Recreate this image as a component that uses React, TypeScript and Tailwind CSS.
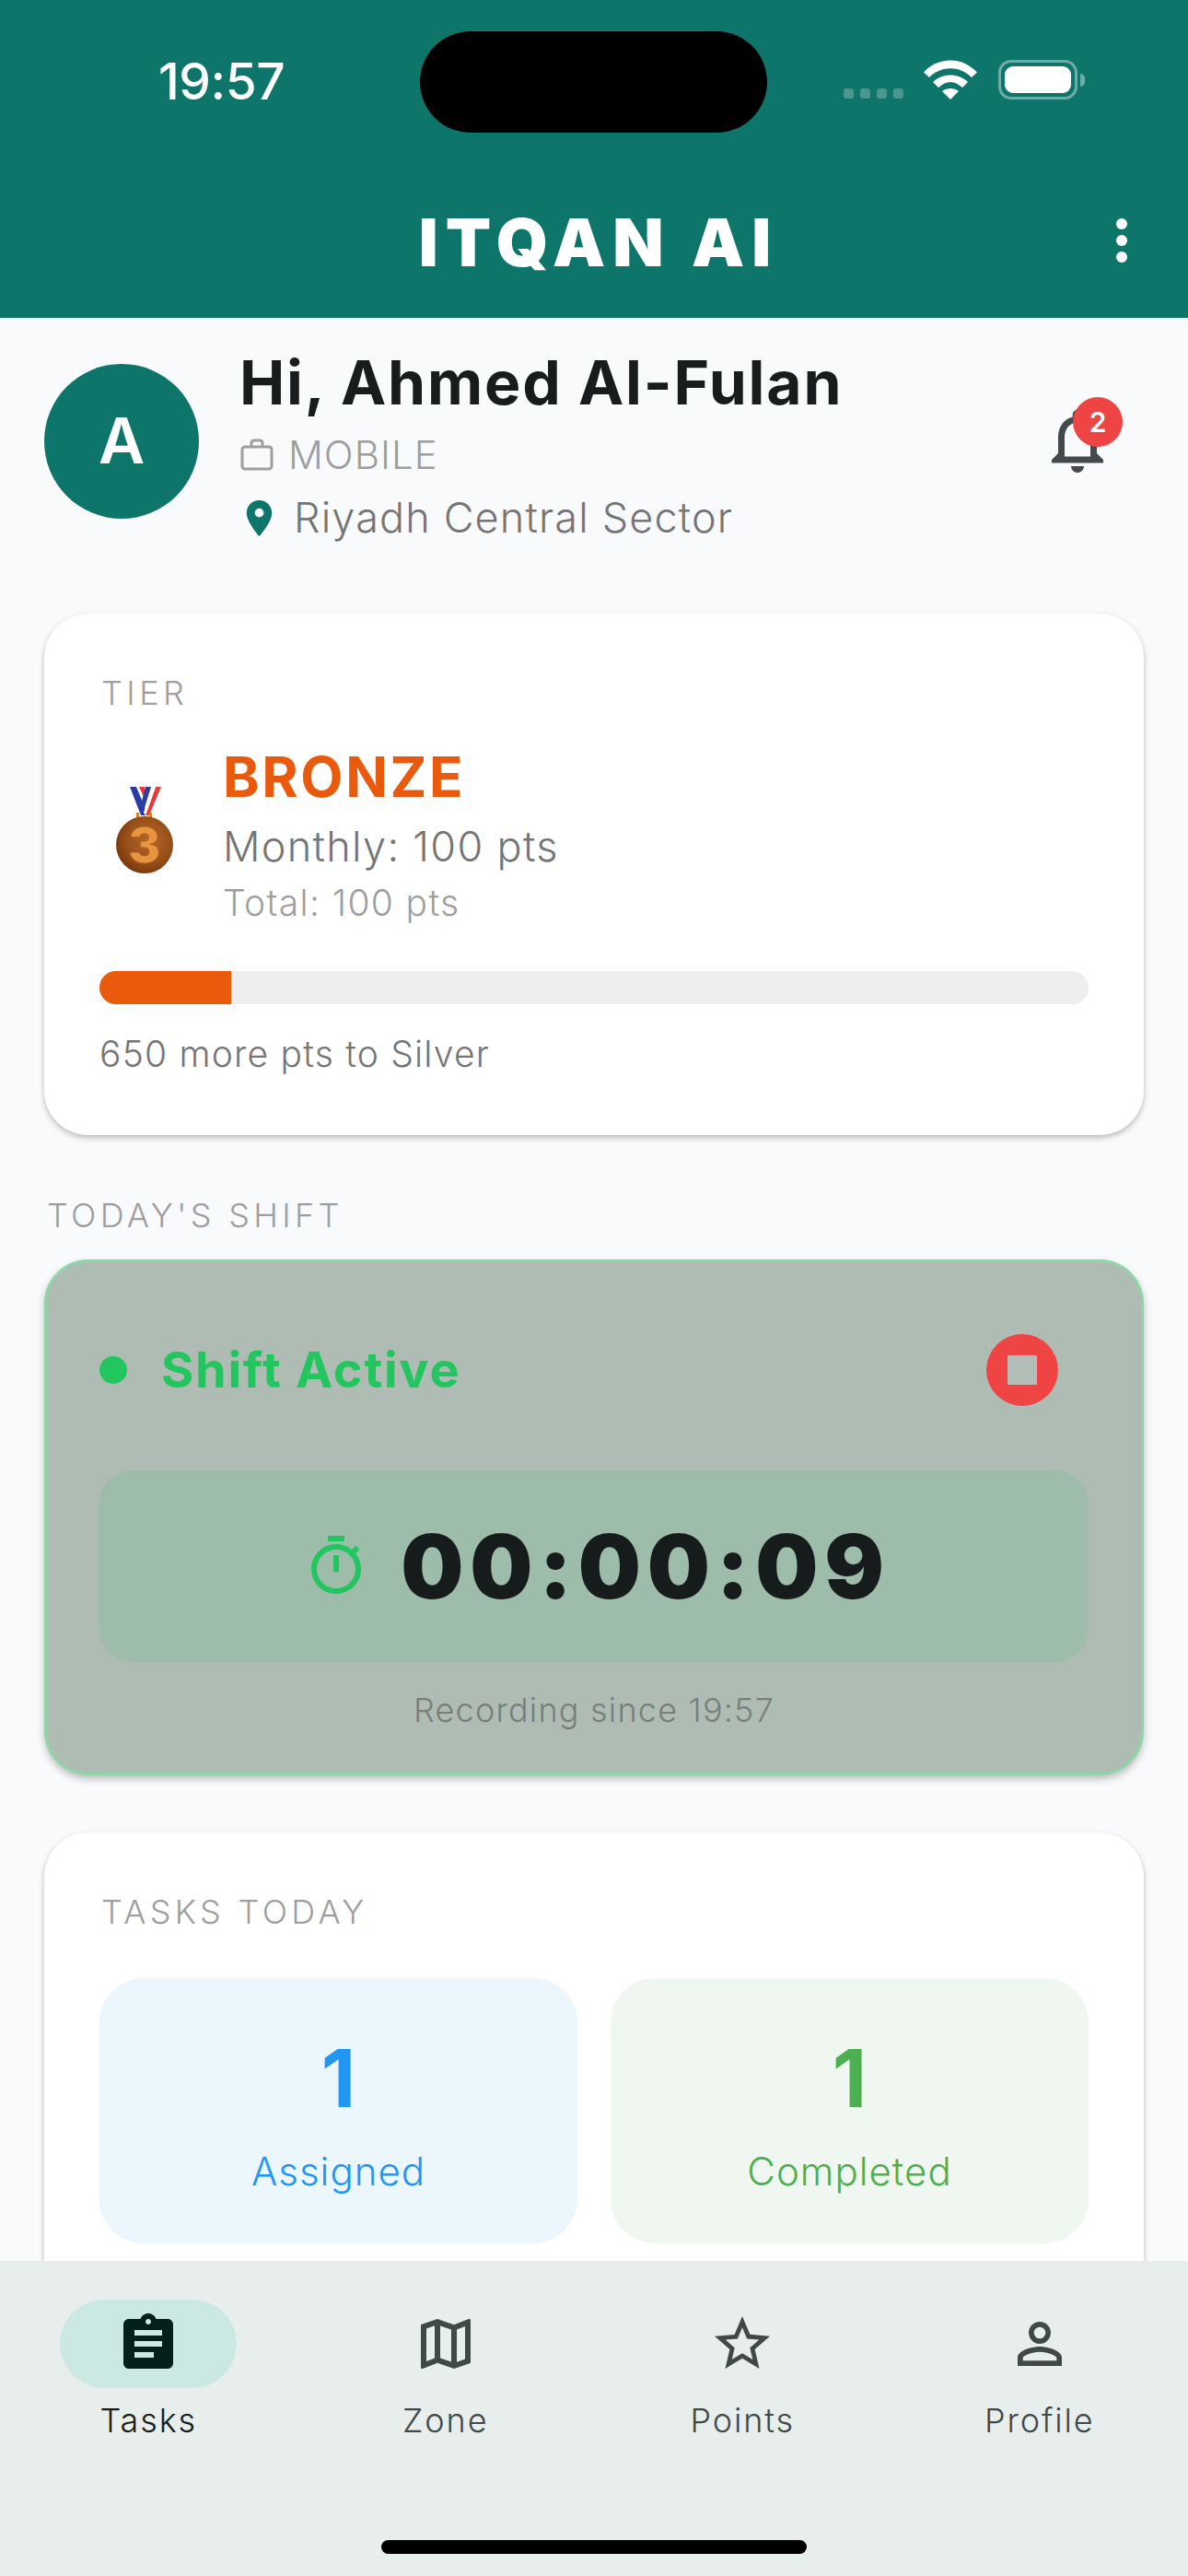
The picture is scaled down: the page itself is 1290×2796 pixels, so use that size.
import React from "react";
import { MdAssignment, MdLocationOn, MdOutlineMap, MdOutlineNotifications, MdOutlineTimer, MdPersonOutline, MdStarBorder } from "react-icons/md";

const navItems = [
  { label: "Tasks", icon: MdAssignment, active: true },
  { label: "Zone", icon: MdOutlineMap, active: false },
  { label: "Points", icon: MdStarBorder, active: false },
  { label: "Profile", icon: MdPersonOutline, active: false },
];

const StatusBar = () => (
  <div className="relative h-[180px]">
    <span className="absolute left-[172px] top-[61px] text-[55px] font-medium leading-[54px] tracking-[-0.5px] text-white">19:57</span>
    <div className="absolute left-[456px] top-[34px] h-[110px] w-[377px] rounded-full bg-black" />
    <div className="absolute left-[916px] top-[96px] flex gap-[7px]">
      {[0, 1, 2, 3].map((i) => (
        <span key={i} className="h-[11px] w-[11px] rounded-[3px] bg-white/25" />
      ))}
    </div>
    <svg className="absolute left-[1003px] top-[65px]" width="58" height="43" viewBox="0 0 58 43" fill="#fff">
      <path d="M0 13.5 C16 -4 42 -4 58 13.5 L52 19 C39 6 19 6 6 19Z" />
      <path d="M10 24 C20 14 38 14 48 24 L42 30 C33 22 25 22 16 30Z" />
      <path d="M20 34 C25 30 33 30 38 34 L29 43Z" />
    </svg>
    <div className="absolute left-[1084px] top-[65px] h-[43px] w-[86px] rounded-[14px] border-[3px] border-white/40 p-[4px]">
      <div className="h-full w-full rounded-[9px] bg-white" />
    </div>
    <div className="absolute left-[1173px] top-[80px] h-[14px] w-[5px] rounded-r-full bg-white/40" />
  </div>
);

const Medal = () => (
  <svg width="66" height="96" viewBox="0 0 66 96" className="shrink-0">
    <defs>
      <radialGradient id="bronze" cx="58%" cy="42%" r="62%">
        <stop offset="0%" stopColor="#B4682C" />
        <stop offset="65%" stopColor="#964F18" />
        <stop offset="100%" stopColor="#78380B" />
      </radialGradient>
    </defs>
    <path d="M26 0 H33 V13 Z" fill="#E93A3A" />
    <path d="M24 0 H27 L33 14 L34 24 Z" fill="#FFFFFF" />
    <path d="M17 0 H24 L34 24 V31 H29 Z" fill="#2B3BA6" />
    <path d="M45 0 H51 L38 31 H34 Z" fill="#E93A3A" />
    <path d="M40 0 H45 L34 31 L32 28 Z" fill="#FFFFFF" />
    <path d="M34 0 H40 L31 29 L28 23 Z" fill="#2B3BA6" />
    <rect x="24" y="28" width="3" height="6" fill="#C98A2A" />
    <rect x="38" y="28" width="3" height="6" fill="#C98A2A" />
    <circle cx="33" cy="63" r="31" fill="url(#bronze)" />
    <text x="33" y="82" textAnchor="middle" fontSize="52" fontWeight="900" fontFamily="Inter, sans-serif" fill="#E8953F" stroke="#A85C1C" strokeWidth="1">3</text>
  </svg>
);

const BriefcaseIcon = () => (
  <svg width="36" height="36" viewBox="0 0 36 36" fill="none" stroke="#9E9E9E" strokeWidth="3" className="shrink-0">
    <rect x="2" y="9" width="32" height="24" rx="3" />
    <path d="M12 9 V5 Q12 2 15 2 H21 Q24 2 24 5 V9" />
  </svg>
);

export default function App() {
  return (
    <div className="flex h-[2796px] w-[1290px] flex-col overflow-hidden bg-[#F9FAFC] font-['Inter',sans-serif]">
      <header className="h-[345px] shrink-0 bg-[#0E756B]">
        <StatusBar />
        <div className="relative flex h-[165px] items-center justify-center">
          <span className="ml-[10px] text-[72px] leading-none font-black tracking-[8px] text-white">ITQAN AI</span>
          <div className="absolute right-[66px] top-[57px] flex flex-col gap-[6px]">
            <span className="h-[12px] w-[12px] rounded-full bg-white" />
            <span className="h-[12px] w-[12px] rounded-full bg-white" />
            <span className="h-[12px] w-[12px] rounded-full bg-white" />
          </div>
        </div>
      </header>

      <main className="min-h-0 flex-1 overflow-hidden px-[48px] pt-[31px]">
        <section className="flex items-start">
          <div className="mt-[19px] flex h-[168px] w-[168px] shrink-0 items-center justify-center rounded-full bg-[#0E756B] text-[69px] font-semibold text-white">A</div>
          <div className="ml-[44px] flex-1">
            <div className="text-[66px] leading-[78px] font-bold tracking-[1.8px] text-[#191C1D]">Hi, Ahmed Al-Fulan</div>
            <div className="mt-[16px] ml-[1px] flex items-center gap-[16px] text-[42px] leading-[48px] font-[350] tracking-[1px] text-[#9E9E9E]">
              <BriefcaseIcon />
              MOBILE
            </div>
            <div className="mt-[17px] ml-[-2px] flex items-center gap-[14px] text-[45px] leading-[54px] font-[350] tracking-[1.15px] text-[#757575]">
              <MdLocationOn size={47} className="text-[#0E756B]" />
              Riyadh Central Sector
            </div>
          </div>
          <div className="relative mr-[30px] mt-[60px]">
            <MdOutlineNotifications size={84} className="text-[#444A4B]" />
            <span className="absolute left-[37px] top-[-5px] flex h-[54px] w-[54px] items-center justify-center rounded-full bg-[#EF4444] text-[30px] font-semibold text-white">2</span>
          </div>
        </section>

        <section className="mt-[77px] h-[566px] rounded-[48px] bg-white px-[60px] pt-[66px] shadow-[0_3px_6px_rgba(0,0,0,0.25)]">
          <div className="ml-[2px] text-[36px] leading-[40px] font-[350] tracking-[4.4px] text-[#9E9E9E]">TIER</div>
          <div className="mt-[36px] flex items-start">
            <div className="ml-[16px] mt-[46px]"><Medal /></div>
            <div className="ml-[52px]">
              <div className="text-[60px] leading-[70px] font-bold tracking-[2.6px] text-[#EA5A0C]">BRONZE</div>
              <div className="mt-[14px] text-[45px] leading-[54px] font-[350] tracking-[1.3px] text-[#757575]">Monthly: 100 pts</div>
              <div className="mt-[12px] text-[39px] leading-[44px] font-[350] tracking-[1.35px] text-[#9E9E9E]">Total: 100 pts</div>
            </div>
          </div>
          <div className="mt-[52px] h-[36px] overflow-hidden rounded-full bg-[#EEEEEE]">
            <div className="h-full w-[143px] bg-[#EA5A0C]" />
          </div>
          <div className="mt-[31px] text-[39px] leading-[46px] font-[350] tracking-[1.2px] text-[#757575]">650 more pts to Silver</div>
        </section>

        <div className="mt-[66px] ml-[3px] text-[36px] leading-[42px] font-[350] tracking-[4.3px] text-[#9E9E9E]">TODAY'S SHIFT</div>

        <section className="mt-[27px] h-[560px] rounded-[48px] border-[3px] border-[#90D5A8] bg-[#AFBCB4] px-[57px] pt-[76px] shadow-[0_4px_8px_rgba(0,0,0,0.25)]">
          <div className="flex items-center">
            <span className="h-[30px] w-[30px] rounded-full bg-[#22C55E]" />
            <span className="ml-[37px] text-[54px] font-bold tracking-[1.75px] text-[#22C55E]">Shift Active</span>
            <button className="ml-auto mr-[33px] flex h-[78px] w-[78px] items-center justify-center rounded-full bg-[#EF4444]">
              <span className="h-[32px] w-[32px] bg-[#B4BEB8]" />
            </button>
          </div>
          <div className="mt-[69px] flex h-[208px] items-center justify-center rounded-[36px] bg-[#9DBDAA] pl-[6px]">
            <MdOutlineTimer size={72} className="text-[#22C55E]" />
            <span className="ml-[34px] text-[96px] leading-none font-black tracking-[6.75px] text-[#161C1C]">00:00:09</span>
          </div>
          <div className="mt-[30px] text-center text-[36px] leading-[44px] font-[350] tracking-[1.2px] text-[#787F7A]">Recording since 19:57</div>
        </section>

        <section className="mt-[62px] h-[600px] rounded-[48px] bg-white px-[60px] pt-[65px] shadow-[0_3px_6px_rgba(0,0,0,0.25)]">
          <div className="ml-[2px] text-[36px] leading-[42px] font-[350] tracking-[4.3px] text-[#9E9E9E]">TASKS TODAY</div>
          <div className="mt-[51px] grid grid-cols-2 gap-[36px]">
            <div className="flex h-[288px] flex-col items-center rounded-[48px] bg-[#EBF6FD] pt-[59px] text-[#2196F3]">
              <span className="text-[87px] leading-[100px] font-bold">1</span>
              <span className="mt-[25px] text-[42px] leading-[52px] font-[350] tracking-[1px]">Assigned</span>
            </div>
            <div className="flex h-[288px] flex-col items-center rounded-[48px] bg-[#F0F7F1] pt-[59px] text-[#4CAF50]">
              <span className="text-[87px] leading-[100px] font-bold">1</span>
              <span className="mt-[25px] text-[42px] leading-[52px] font-[350] tracking-[1px]">Completed</span>
            </div>
          </div>
        </section>
      </main>

      <nav className="relative h-[342px] shrink-0 bg-[#E8EEEC]">
        <div className="grid grid-cols-4 pt-[42px]">
          {navItems.map((item) => {
            const Icon = item.icon;
            return (
              <div key={item.label} className="flex flex-col items-center">
                <div className={`flex h-[96px] w-[192px] items-center justify-center rounded-full ${item.active ? "bg-[#CCE8E3]" : ""}`}>
                  <Icon size={72} className={item.active ? "text-[#051F1C]" : "text-[#3F4948]"} />
                </div>
                <span className={`mt-[12px] text-[36px] leading-[46px] font-[350] tracking-[1.9px] ${item.active ? "text-[#171D1C]" : "text-[#3F4948]"}`}>{item.label}</span>
              </div>
            );
          })}
        </div>
        <div className="absolute bottom-[24px] left-[414px] h-[15px] w-[462px] rounded-full bg-black" />
      </nav>
    </div>
  );
}
